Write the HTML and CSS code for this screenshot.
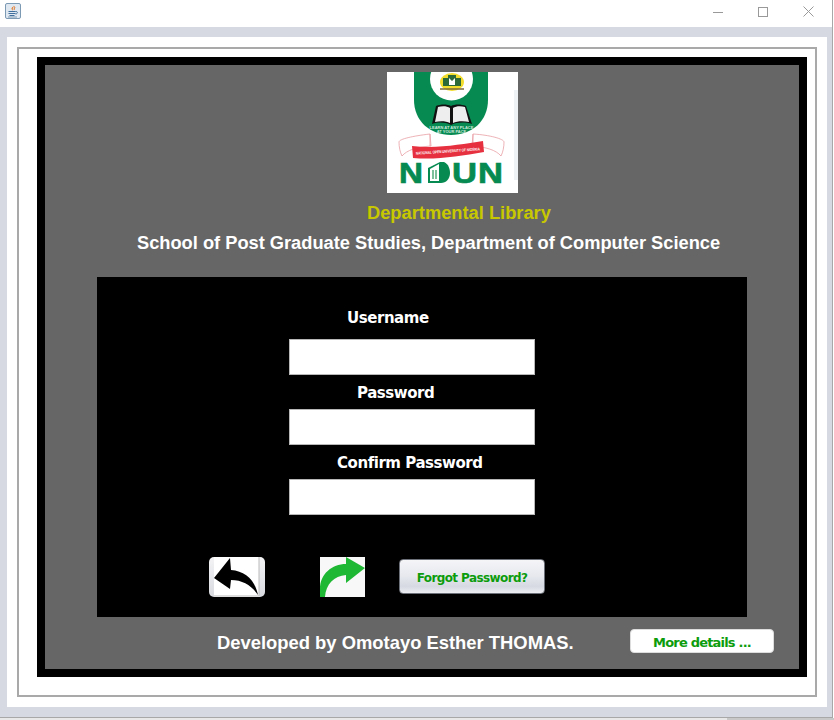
FILE: index.html
```html
<!DOCTYPE html>
<html lang="en">
<head>
<meta charset="utf-8">
<title>Departmental Library</title>
<link rel="stylesheet" href="styles.css">
</head>
<body>
<div class="window">
  <header class="titlebar">
    <svg class="java-icon" width="16" height="16" viewBox="0 0 16 16">
      <rect x="0.5" y="0.5" width="15" height="15" rx="1.5" fill="#dfe8f0" stroke="#7d9ab5"/>
      <path d="M8 2c1.5 1.5-1.5 2.5-1.5 3.6 0 1 1 1.4 1.4 2.2 0.3-1-1-1.6 0.2-3 0.9-1 0.7-2-0.1-2.800z" fill="#e2711d"/>
      <path d="M9.500 3.500c1 1-.8 2-.3 3.400" stroke="#e2711d" stroke-width="1" fill="none"/>
      <path d="M3.500 8.500h7M3.500 10.500h7M4.500 12.500h5" stroke="#3f6f9c" stroke-width="1"/>
      <path d="M10.500 8.500c2.500-.5 2.500 2.500 0 2.500" stroke="#3f6f9c" stroke-width="1" fill="none"/>
      <path d="M3 14h9" stroke="#7d9ab5" stroke-width="1"/>
    </svg>
    <div class="controls">
      <svg width="10" height="10" viewBox="0 0 10 10"><path d="M0 5.500h10" stroke="#999" stroke-width="1"/></svg>
      <svg width="10" height="10" viewBox="0 0 10 10"><rect x="0.500" y="0.500" width="9" height="9" fill="none" stroke="#999"/></svg>
      <svg width="11" height="11" viewBox="0 0 11 11"><path d="M0.500 0.500l10 10M10.500 0.500l-10 10" stroke="#999" stroke-width="1"/></svg>
    </div>
  </header>
  <main class="frame">
    <div class="sheet">
      <div class="etched">
        <div class="black-frame">
          <div class="gray-area">
            <svg class="logo" width="131" height="121" viewBox="0 0 131 121">
              <rect width="131" height="121" fill="#fff"/>
              <rect x="127" y="18" width="4" height="90" fill="#eef2f4"/>
              <path d="M27 0h74v28c0 21-16 35-37 35S27 49 27 28z" fill="#078a52"/>
              <circle cx="64.500" cy="7" r="21.500" fill="#fff"/>
              <ellipse cx="65" cy="10" rx="12" ry="9" fill="#f2dc2c"/>
              <path d="M61 3h8v3h5v8H56V6h5z" fill="#2c6a3a"/>
              <path d="M62 6l3 3 3-3v7h-6z" fill="#fff"/>
              <path d="M53 17h24" stroke="#7a6a3a" stroke-width="1.500"/>
              <path d="M45 52l4-18c5-2 11-2 15 0 4-2 10-2 15 0l6 18c-7-2-15-2-21 1-6-3-13-3-19-1z" fill="#111"/>
              <path d="M48 50l3-15c4-1 9-1 12 1v15c-4-2-10-2-15-1zM66 36c3-2 8-2 12-1l4 15c-5-1-12-1-16 1z" fill="#eee"/>
              <text class="logo-motto" x="64.500" y="56.500">LEARN AT ANY PLACE</text>
              <text class="logo-motto" x="64.500" y="60.500">AT YOUR PACE</text>
              <path d="M12 70c0-3 14-6 31-8l1 12c-14 1-24 4-29 10-2-4-3-9-3-14zM117 70c0-3-14-7-31-8l-1 12c14 1 24 4 29 10 2-4 3-9 3-14z" fill="#fff" stroke="#e8a0a4" stroke-width="0.800"/>
              <path d="M43 62v12M86 62v12" stroke="#e8a0a4" stroke-width="0.800"/>
              <path d="M25 74c26 3 50-2 71-5l1 11c-24 4-47 8-71 6z" fill="#e6303f"/>
              <text class="logo-ribbon" x="61" y="80.500" transform="rotate(-4 61 80.500)" textLength="64" lengthAdjust="spacingAndGlyphs">NATIONAL OPEN UNIVERSITY OF NIGERIA</text>
              <text class="logo-letter" x="12" y="111" textLength="24" lengthAdjust="spacingAndGlyphs">N</text>
              <path d="M41 96l12-6h4c5 2 6 8 6 11 0 6-4 10-9 10H41z" fill="#078a52"/>
              <path d="M43 97l9-5v17h-9z" fill="#fff"/>
              <path d="M45 98h5v9h-5z" fill="#7bbf9b"/>
              <path d="M47.500 98v9" stroke="#fff"/>
              <text class="logo-letter" x="65" y="111" textLength="25" lengthAdjust="spacingAndGlyphs">U</text>
              <text class="logo-letter" x="91" y="111" textLength="25" lengthAdjust="spacingAndGlyphs">N</text>
            </svg>
            <h1 class="title-library">Departmental Library</h1>
            <h2 class="title-school">School of Post Graduate Studies, Department of Computer Science</h2>
            <section class="login">
              <label class="field-label label-user">Username</label>
              <input class="field" type="text">
              <label class="field-label label-pass">Password</label>
              <input class="field" type="password">
              <label class="field-label label-confirm">Confirm Password</label>
              <input class="field" type="password">
              <div class="actions">
                <button class="icon-btn back" type="button" aria-label="Back">
                  <svg width="46" height="40" viewBox="0 0 46 40">
                    <rect width="45" height="40" fill="#fff"/>
                    <path d="M45 0v39H0" fill="none" stroke="#bbb" stroke-width="1"/>
                    <path d="M0 21L16 1l1 12c14 1 24 10 27 25-6-9-15-15-27-15l-1 9z" fill="#000"/>
                  </svg>
                </button>
                <span class="icon-img">
                  <svg width="45" height="40" viewBox="0 0 45 40">
                    <rect width="45" height="40" fill="#f8f8f8"/>
                    <path d="M45 11L26 0v7C12 7 0 17 0 32v8h5C6 27 14 19 26 18v8z" fill="#1fb834"/>
                  </svg>
                </span>
                <button class="forgot" type="button">Forgot Password?</button>
              </div>
            </section>
            <footer class="footer">
              <span class="credit">Developed by Omotayo Esther THOMAS.</span>
              <button class="more" type="button">More details ...</button>
            </footer>
          </div>
        </div>
      </div>
    </div>
  </main>
</div>
<div class="desktop-strip"></div>
</body>
</html>
```
FILE: styles.css
```css
* { box-sizing: border-box; }
html, body { margin: 0; background: #fff; }
body { width: 834px; height: 720px; overflow: hidden; }
.window {
  width: 833px;
  height: 718px;
  border-right: 1px solid #a8a8a8;
  border-bottom: 1px solid #a8a8a8;
  display: flex;
  flex-direction: column;
  font-family: "Liberation Sans", Arial, sans-serif;
}
.desktop-strip {
  width: 834px;
  height: 2px;
  background: linear-gradient(90deg, #e8e8e8 0 727px, #c8c8c8 727px);
}
.titlebar {
  height: 27px;
  background: #fff;
  display: flex;
  align-items: flex-start;
  justify-content: space-between;
}
.java-icon { margin: 3px 0 0 5px; }
.controls {
  display: flex;
  align-items: center;
  gap: 35px;
  margin: 6px 18px 0 0;
}
.frame {
  flex: 1;
  background: #d6d9e2;
  padding: 10px 5px 10px 7px;
}
.sheet {
  height: 670px;
  background: #fff;
  padding: 10px;
}
.etched {
  height: 650px;
  border: 2px solid #a9a9a9;
  padding: 8px 8px 18px 18px;
}
.black-frame {
  height: 620px;
  border: 8px solid #000;
  background: #666;
}
.gray-area { height: 604px; display: flex; flex-direction: column; align-items: flex-start; }
.logo { display: block; margin: 7px 0 0 342px; }
.title-library {
  margin: 10px 0 0 322px;
  font-size: 18.300px;
  line-height: 20px;
  font-weight: 700;
  color: #c8c800;
  white-space: nowrap;
}
.title-school {
  margin: 10px 0 0 92px;
  font-size: 18.250px;
  line-height: 20px;
  font-weight: 700;
  color: #fff;
  white-space: nowrap;
}
.login {
  width: 650px;
  height: 340px;
  margin: 24px 0 0 52px;
  padding: 31px 0 0 192px;
  background: #000;
  display: flex;
  flex-direction: column;
  align-items: flex-start;
}
.field-label {
  font-family: "DejaVu Sans", sans-serif;
  font-size: 15px;
  line-height: 20px;
  font-weight: 700;
  color: #fff;
  letter-spacing: -0.45px;
  white-space: nowrap;
}
.label-user { margin: 0 0 11px 58px; }
.label-pass { margin: 8px 0 6px 68px; }
.label-confirm { margin: 8px 0 6px 48px; }
.field {
  display: block;
  width: 246px;
  height: 36px;
  padding: 0;
  background: #fff;
  border: 1px solid #b8b8b8;
  border-radius: 0;
}
.actions {
  display: flex;
  align-items: flex-start;
  margin: 42px 0 0 -80px;
}
.icon-btn {
  width: 56px;
  height: 40px;
  padding: 0 0 0 5px;
  border: 0;
  border-radius: 5px;
  background: linear-gradient(#f4f4f6, #d8dae0);
  display: block;
}
.icon-btn svg, .icon-img svg { display: block; }
.icon-img { display: block; margin-left: 55px; }
.forgot {
  width: 146px;
  height: 35px;
  margin: 2px 0 0 34px;
  padding: 2px 0 0;
  border: 1px solid #6c7078;
  border-radius: 4px;
  background: linear-gradient(#f5f5f8 0%, #e6e8ee 50%, #d6d9e2 80%, #eceef2 100%);
  color: #0c9c0c;
  font-family: "DejaVu Sans", sans-serif;
  font-size: 12px;
  font-weight: 700;
  letter-spacing: -0.6px;
}
.footer {
  display: flex;
  align-items: center;
  margin: 12px 0 0 172px;
  height: 24px;
}
.credit {
  font-size: 18.400px;
  font-weight: 700;
  color: #fff;
  white-space: nowrap;
  width: 413px;
  padding-top: 3px;
}
.more {
  width: 144px;
  height: 24px;
  padding: 2px 0 0;
  border: 1px solid #ddd;
  border-radius: 4px;
  background: #fff;
  color: #0c9c0c;
  font-family: "DejaVu Sans", sans-serif;
  font-size: 13px;
  font-weight: 700;
  letter-spacing: -0.8px;
}
.logo-motto {
  font-size: 4px;
  font-weight: 700;
  fill: #cfe8da;
  text-anchor: middle;
  font-family: "Liberation Sans", sans-serif;
}
.logo-ribbon {
  font-size: 4px;
  font-weight: 700;
  fill: #fff;
  text-anchor: middle;
  font-family: "Liberation Sans", sans-serif;
}
.logo-letter {
  font-size: 29px;
  font-weight: 700;
  fill: #078a52;
  stroke: #078a52;
  stroke-width: 0.700px;
  font-family: "Liberation Sans", sans-serif;
}
```
